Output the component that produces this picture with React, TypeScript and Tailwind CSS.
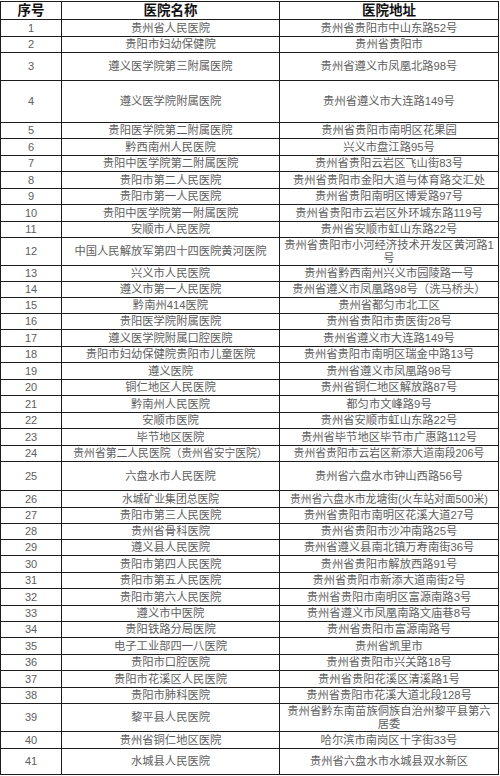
import React from 'react'

type Row = {
  no: number
  name: string
  addr: string
  h: string
  small?: boolean
}

const rows: Row[] = [
  { no: 1, name: '贵州省人民医院', addr: '贵州省贵阳市中山东路52号', h: 'h-[17px]' },
  { no: 2, name: '贵阳市妇幼保健院', addr: '贵州省贵阳市', h: 'h-[16px]' },
  { no: 3, name: '遵义医学院第三附属医院', addr: '贵州省遵义市凤凰北路98号', h: 'h-[28px]' },
  { no: 4, name: '遵义医学院附属医院', addr: '贵州省遵义市大连路149号', h: 'h-[42px]' },
  { no: 5, name: '贵阳医学院第二附属医院', addr: '贵州省贵阳市南明区花果园', h: 'h-[16px]' },
  { no: 6, name: '黔西南州人民医院', addr: '兴义市盘江路95号', h: 'h-[17px]' },
  { no: 7, name: '贵阳中医学院第二附属医院', addr: '贵州省贵阳云岩区飞山街83号', h: 'h-[16px]' },
  { no: 8, name: '贵阳市第二人民医院', addr: '贵州省贵阳市金阳大道与体育路交汇处', h: 'h-[17px]' },
  { no: 9, name: '贵阳市第一人民医院', addr: '贵州省贵阳南明区博爱路97号', h: 'h-[16px]' },
  { no: 10, name: '贵阳中医学院第一附属医院', addr: '贵州省贵阳市云岩区外环城东路119号', h: 'h-[17px]' },
  { no: 11, name: '安顺市人民医院', addr: '贵州省安顺市虹山东路22号', h: 'h-[16px]' },
  { no: 12, name: '中国人民解放军第四十四医院黄河医院', addr: '贵州省贵阳市小河经济技术开发区黄河路1\n号', h: 'h-[28px]' },
  { no: 13, name: '兴义市人民医院', addr: '贵州省黔西南州兴义市园陵路一号', h: 'h-[16px]' },
  { no: 14, name: '遵义市第一人民医院', addr: '贵州省遵义市凤凰路98号（洗马桥头）', h: 'h-[16px]' },
  { no: 15, name: '黔南州414医院', addr: '贵州省都匀市北工区', h: 'h-[16px]' },
  { no: 16, name: '贵阳医学院附属医院', addr: '贵州省贵阳市贵医街28号', h: 'h-[16px]' },
  { no: 17, name: '遵义医学院附属口腔医院', addr: '贵州省遵义市大连路149号', h: 'h-[17px]' },
  { no: 18, name: '贵阳市妇幼保健院贵阳市儿童医院', addr: '贵州省贵阳市南明区瑞金中路13号', h: 'h-[16px]' },
  { no: 19, name: '遵义医院', addr: '贵州省遵义市凤凰路98号', h: 'h-[17px]' },
  { no: 20, name: '铜仁地区人民医院', addr: '贵州省铜仁地区解放路87号', h: 'h-[16px]' },
  { no: 21, name: '黔南州人民医院', addr: '都匀市文峰路9号', h: 'h-[17px]' },
  { no: 22, name: '安顺市医院', addr: '贵州省安顺市虹山东路22号', h: 'h-[16px]' },
  { no: 23, name: '毕节地区医院', addr: '贵州省毕节地区毕节市广惠路112号', h: 'h-[17px]' },
  { no: 24, name: '贵州省第二人民医院（贵州省安宁医院）', addr: '贵州省贵阳市云岩区新添大道南段206号', h: 'h-[16px]', small: true },
  { no: 25, name: '六盘水市人民医院', addr: '贵州省六盘水市钟山西路56号', h: 'h-[29px]' },
  { no: 26, name: '水城矿业集团总医院', addr: '贵州省六盘水市龙塘街(火车站对面500米)', h: 'h-[17px]', small: true },
  { no: 27, name: '贵阳市第三人民医院', addr: '贵州省贵阳市南明区花溪大道27号', h: 'h-[16px]' },
  { no: 28, name: '贵州省骨科医院', addr: '贵州省贵阳市沙冲南路25号', h: 'h-[16px]' },
  { no: 29, name: '遵义县人民医院', addr: '贵州省遵义县南北镇万寿南街36号', h: 'h-[16px]' },
  { no: 30, name: '贵阳市第四人民医院', addr: '贵州省贵阳市解放西路91号', h: 'h-[17px]' },
  { no: 31, name: '贵阳市第五人民医院', addr: '贵州省贵阳市新添大道南街2号', h: 'h-[16px]' },
  { no: 32, name: '贵阳市第六人民医院', addr: '贵州省贵阳市南明区富源南路3号', h: 'h-[17px]' },
  { no: 33, name: '遵义市中医院', addr: '贵州省遵义市凤凰南路文庙巷8号', h: 'h-[16px]' },
  { no: 34, name: '贵阳铁路分局医院', addr: '贵州省贵阳市富源南路号', h: 'h-[16px]' },
  { no: 35, name: '电子工业部四一八医院', addr: '贵州省凯里市', h: 'h-[17px]' },
  { no: 36, name: '贵阳市口腔医院', addr: '贵州省贵阳市兴关路18号', h: 'h-[16px]' },
  { no: 37, name: '贵阳市花溪区人民医院', addr: '贵州省贵阳花溪区清溪路1号', h: 'h-[17px]' },
  { no: 38, name: '贵阳市肺科医院', addr: '贵州省贵阳市花溪大道北段128号', h: 'h-[16px]' },
  { no: 39, name: '黎平县人民医院', addr: '贵州省黔东南苗族侗族自治州黎平县第六\n居委', h: 'h-[28px]' },
  { no: 40, name: '贵州省铜仁地区医院', addr: '哈尔滨市南岗区十字街33号', h: 'h-[17px]' },
  { no: 41, name: '水城县人民医院', addr: '贵州省六盘水市水城县双水新区', h: 'h-[26px]' },
]

const cell = 'flex items-center justify-center text-center border-r border-[#1c1c1c] overflow-hidden'

export default function App() {
  return (
    <div className="w-[500px] h-[776px] bg-white pt-px font-['Liberation_Sans','Noto_Sans_CJK_SC',sans-serif]">
      <div className="w-[499px] border-l border-t border-[#1c1c1c]">
        {/* Header */}
        <div className="grid grid-cols-[61px_218px_219px] h-[18px] border-b border-[#1c1c1c] text-[13.5px] font-bold text-[#111] leading-none">
          <div className={cell}>序号</div>
          <div className={cell}>医院名称</div>
          <div className={cell}>医院地址</div>
        </div>

        {rows.map((row) => (
          <div
            key={row.no}
            className={`grid grid-cols-[61px_218px_219px] ${row.h} border-b border-[#1c1c1c] text-[#5e5e5e] leading-[13px]`}
          >
            <div className={`${cell} text-[11px]`}>{row.no}</div>
            <div className={`${cell} whitespace-nowrap ${row.small ? 'text-[10.8px]' : 'text-[11.3px]'}`}>
              {row.name}
            </div>
            <div className={`${cell} whitespace-pre-line ${row.small ? 'text-[10.8px] whitespace-nowrap' : 'text-[11.3px]'}`}>
              {row.addr}
            </div>
          </div>
        ))}
      </div>
    </div>
  )
}
